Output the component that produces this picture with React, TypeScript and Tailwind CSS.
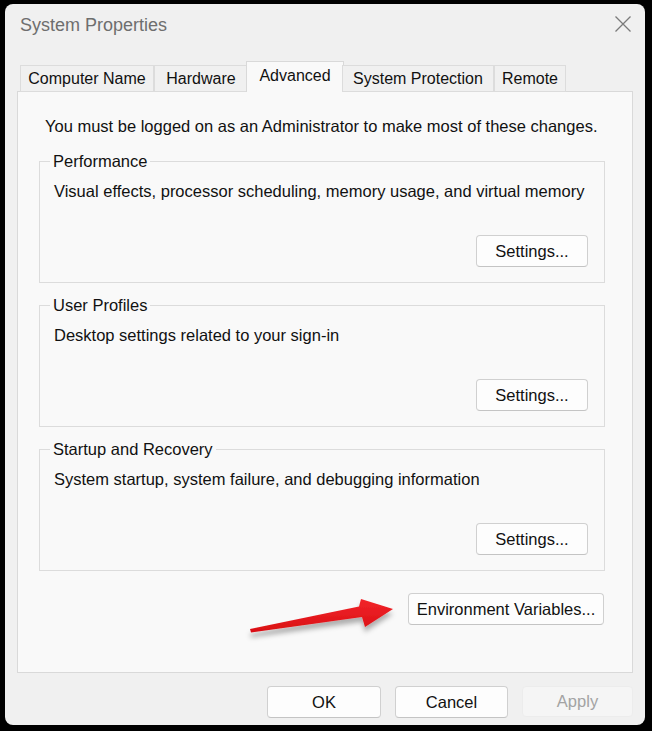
import React from 'react';

const font = { fontFamily: '"Liberation Sans", Arial, sans-serif' };

const tabs = [
  { label: 'Computer Name', w: 'w-[134px]' },
  { label: 'Hardware', w: 'w-[94px]' },
  { label: 'Advanced', w: 'w-[98px]', active: true },
  { label: 'System Protection', w: 'w-[152px]' },
  { label: 'Remote', w: 'w-[72px]' },
];

const groups = [
  { title: 'Performance', text: 'Visual effects, processor scheduling, memory usage, and virtual memory' },
  { title: 'User Profiles', text: 'Desktop settings related to your sign-in' },
  { title: 'Startup and Recovery', text: 'System startup, system failure, and debugging information' },
];

const btn =
  'h-[32px] rounded-[4px] border border-[#d0d0d0] border-b-[#c4c4c4] bg-[#fdfdfd] text-[16.5px] text-[#111] flex items-center justify-center';

function GroupBox({ title, text, first }: { title: string; text: string; first?: boolean }) {
  return (
    <div
      className={`ml-[21px] w-[566px] h-[122px] border border-[#dcdcdc] pl-[10px] pr-[16px] flex flex-col ${
        first ? 'mt-[24px]' : 'mt-[22px]'
      }`}
    >
      <span className="-mt-[11px] self-start px-[3px] bg-[#f9f9f9] leading-[20px] text-[16.5px] text-[#111]">
        {title}
      </span>
      <p className="mt-[10px] pl-[4px] leading-[21px] text-[16.5px] text-[#111]">{text}</p>
      <button className={`${btn} mt-auto mb-[15px] self-end w-[112px]`}>Settings...</button>
    </div>
  );
}

export default function App() {
  return (
    <div className="w-[652px] h-[731px] bg-black pt-[4px] pl-[5px] pr-[7px] pb-[6px]" style={font}>
      <div className="relative h-full rounded-[8px] bg-[#f0f0f0] flex flex-col overflow-hidden">
        {/* title bar */}
        <div className="h-[57px] flex items-start justify-between pl-[15px] pr-[13px]">
          <span className="mt-[9px] text-[18px] leading-[24px] text-[#6e6e6e]">System Properties</span>
          <svg className="mt-[11px]" width="18" height="18" viewBox="0 0 18 18">
            <path d="M1.5 1.5 L16.5 16.5 M16.5 1.5 L1.5 16.5" stroke="#7a7a7a" strokeWidth="1.3" fill="none" />
          </svg>
        </div>

        {/* tabs */}
        <div className="relative z-10 h-[31px] ml-[15px] flex items-end">
          {tabs.map((t) =>
            t.active ? (
              <div
                key={t.label}
                className={`${t.w} -mx-[2px] h-[31px] border border-b-0 border-[#d9d9d9] bg-[#f9f9f9] flex items-center justify-center text-[16px] text-[#111] pb-[2px]`}
              >
                {t.label}
              </div>
            ) : (
              <div
                key={t.label}
                className={`${t.w} h-[27px] border border-[#dcdcdc] bg-[#f0f0f0] flex items-center justify-center text-[16px] text-[#111]`}
              >
                {t.label}
              </div>
            )
          )}
        </div>

        {/* panel */}
        <div className="-mt-px ml-[12px] w-[616px] h-[582px] border border-[#d9d9d9] bg-[#f9f9f9] flex flex-col pt-[24px]">
          <p className="pl-[27px] leading-[21px] text-[16.5px] text-[#111]">
            You must be logged on as an Administrator to make most of these changes.
          </p>
          {groups.map((g, i) => (
            <GroupBox key={g.title} title={g.title} text={g.text} first={i === 0} />
          ))}
          <button className={`${btn} mt-[22px] self-end mr-[28px] w-[196px] h-[32px]`}>
            Environment Variables...
          </button>
        </div>

        {/* bottom buttons */}
        <div className="mt-[13px] flex justify-end gap-[14px] pr-[12px]">
          <button className={`${btn} w-[114px] h-[31px]`}>OK</button>
          <button className={`${btn} w-[113px] h-[31px]`}>Cancel</button>
          <button className="w-[111px] h-[31px] rounded-[4px] border border-[#ececec] bg-[#f5f5f5] text-[16.5px] text-[#a3a3a3] flex items-center justify-center">
            Apply
          </button>
        </div>

        {/* red arrow annotation */}
        <svg
          className="absolute left-[235px] top-[586px] w-[165px] h-[60px]"
          viewBox="240 590 165 60"
        >
          <defs>
            <filter id="sh" x="-20%" y="-50%" width="140%" height="200%">
              <feDropShadow dx="0" dy="5" stdDeviation="2.5" floodColor="#000" floodOpacity="0.3" />
            </filter>
            <linearGradient id="rg" x1="0" y1="0" x2="0" y2="1">
              <stop offset="0" stopColor="#f2252a" />
              <stop offset="1" stopColor="#d90f14" />
            </linearGradient>
          </defs>
          <polygon
            points="250,629 359,606.5 361,599 393,609 365,627 362,617 251,632.5"
            fill="url(#rg)"
            filter="url(#sh)"
          />
        </svg>
      </div>
    </div>
  );
}
